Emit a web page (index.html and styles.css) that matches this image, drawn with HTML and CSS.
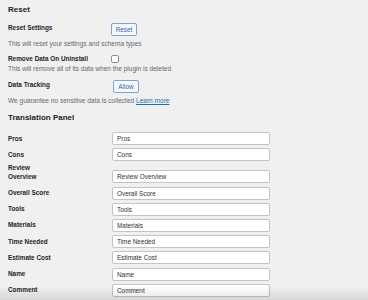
FILE: index.html
```html
<!DOCTYPE html>
<html lang="en">
<head>
    <meta charset="UTF-8">
    <meta name="viewport" content="width=device-width, initial-scale=1.0">
    <title>Plugin Settings</title>
    <link rel="stylesheet" href="styles.css">
</head>
<body>
    <h2 class="section-title">Reset</h2>
    <div class="settings">
        <div class="setting">
            <div class="setting-row">
                <span class="setting-label">Reset Settings</span>
                <button class="btn">Reset</button>
            </div>
            <p class="desc">This will reset your settings and schema types</p>
        </div>
        <div class="setting">
            <div class="setting-row">
                <label class="setting-label" for="remove-data">Remove Data On Uninstall</label>
                <input type="checkbox" id="remove-data" class="check">
            </div>
            <p class="desc">This will remove all of its data when the plugin is deleted</p>
        </div>
        <div class="setting">
            <div class="setting-row">
                <span class="setting-label">Data Tracking</span>
                <button class="btn btn-allow">Allow</button>
            </div>
            <p class="desc">We guarantee no sensitive data is collected <a href="#">Learn more</a></p>
        </div>
    </div>

    <h2 class="section-title translation-title">Translation Panel</h2>
    <div class="fields">
        <div class="field">
            <label for="t-pros">Pros</label>
            <input type="text" id="t-pros" value="Pros">
        </div>
        <div class="field">
            <label for="t-cons">Cons</label>
            <input type="text" id="t-cons" value="Cons">
        </div>
        <div class="field">
            <label for="t-review">Review<br>Overview</label>
            <input type="text" id="t-review" value="Review Overview">
        </div>
        <div class="field">
            <label for="t-score">Overall Score</label>
            <input type="text" id="t-score" value="Overall Score">
        </div>
        <div class="field">
            <label for="t-tools">Tools</label>
            <input type="text" id="t-tools" value="Tools">
        </div>
        <div class="field">
            <label for="t-materials">Materials</label>
            <input type="text" id="t-materials" value="Materials">
        </div>
        <div class="field">
            <label for="t-time">Time Needed</label>
            <input type="text" id="t-time" value="Time Needed">
        </div>
        <div class="field">
            <label for="t-cost">Estimate Cost</label>
            <input type="text" id="t-cost" value="Estimate Cost">
        </div>
        <div class="field">
            <label for="t-name">Name</label>
            <input type="text" id="t-name" value="Name">
        </div>
        <div class="field">
            <label for="t-comment">Comment</label>
            <input type="text" id="t-comment" value="Comment">
        </div>
    </div>
</body>
</html>
```

FILE: styles.css
```css
html, body {
    height: 100%;
    margin: 0;
    overflow: hidden; /* screenshot is cropped */
}
body {
    font-family: "Liberation Sans", Arial, sans-serif;
    background: #f0f0f1;
    color: #1d2327;
    padding: 5px 8px 0;
    box-sizing: border-box;
}
/* soft shade along the bottom edge */
body::after {
    content: "";
    position: fixed;
    left: 0;
    right: 0;
    bottom: 0;
    height: 14px;
    background: linear-gradient(to bottom, rgba(0, 0, 0, 0), rgba(0, 0, 0, 0.1));
    pointer-events: none;
}
.section-title {
    font-size: 8px;
    line-height: 10px;
    font-weight: bold;
    margin: 0;
}
.translation-title {
    margin-top: 8.5px;
}
.settings {
    display: flex;
    flex-direction: column;
    gap: 6.5px;
    margin-top: 7.5px;
}
.setting-row {
    display: flex;
    align-items: flex-start;
}
.setting-label {
    width: 103px;
    flex-shrink: 0;
    font-size: 6.4px;
    line-height: 9px;
    font-weight: bold;
}
.desc {
    margin: 1px 0 0;
    font-size: 6.55px;
    line-height: 9px;
    color: #646970;
}
.desc a {
    color: #2271b1;
}
.btn {
    width: 26px;
    height: 13px;
    margin: 0.5px 0 1.5px;
    padding: 0;
    font-family: inherit;
    font-size: 6.4px;
    color: #2f6cb3;
    background: #f6f7f7;
    border: 1px solid #7fa3d4;
    border-radius: 2px;
    cursor: pointer;
}
.btn-allow {
    margin-left: 2px;
}
.check {
    appearance: none;
    width: 8px;
    height: 8px;
    margin: 0.5px 0 0;
    background: #fff;
    border: 1px solid #8c8f94;
    border-radius: 2px;
    box-sizing: border-box;
}
.fields {
    margin-top: 9px;
}
.field {
    display: flex;
    align-items: flex-end;
    margin-bottom: 3.2px;
}
.field label {
    width: 104px;
    flex-shrink: 0;
    padding-bottom: 2px;
    font-size: 6.4px;
    line-height: 8.5px;
    font-weight: bold;
}
.field input {
    width: 158px;
    height: 13px;
    box-sizing: border-box;
    margin: 0;
    padding: 0 4px;
    font-family: inherit;
    font-size: 6.4px;
    color: #2c3338;
    background: #fff;
    border: 1px solid #c3c4c7;
    border-radius: 2px;
}
```
